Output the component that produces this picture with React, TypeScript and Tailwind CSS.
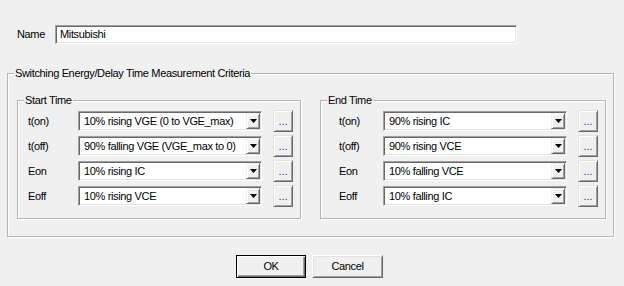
import React from "react";

const font = "font-['Liberation_Sans',Arial,sans-serif] tracking-[-0.35px]";

function DropArrow() {
  return (
    <svg width="7" height="4" viewBox="0 0 7 4">
      <polygon points="0,0 7,0 3.5,4" fill="#000" />
    </svg>
  );
}

function Combo({ value }: { value: string }) {
  return (
    <div className="flex h-[20px] w-[184px] items-stretch border border-t-[#a0a0a0] border-l-[#a0a0a0] border-r-white border-b-white bg-white p-[1px] shadow-[inset_1px_1px_0_#696969,inset_-1px_-1px_0_#e3e3e3]">
      <div className="flex flex-1 items-center pl-[4px] text-[11px] leading-none text-black">{value}</div>
      <div className="flex w-[14px] items-center justify-center border border-t-[#f0f0f0] border-l-[#f0f0f0] border-r-[#696969] border-b-[#696969] bg-[#f0f0f0] shadow-[inset_1px_1px_0_#fff,inset_-1px_-1px_0_#a0a0a0]">
        <DropArrow />
      </div>
    </div>
  );
}

function DotsButton() {
  return (
    <div className="flex h-[22px] w-[20px] items-end justify-center border border-t-[#e3e3e3] border-l-[#e3e3e3] border-r-[#696969] border-b-[#696969] bg-[#f0f0f0] pb-[4px] text-[11px] leading-none tracking-[0px] text-[#2a3a7a] shadow-[inset_1px_1px_0_#fff,inset_-1px_-1px_0_#a0a0a0]">
      ...
    </div>
  );
}

function Row({ label, value, labelW }: { label: string; value: string; labelW: string }) {
  return (
    <div className="flex h-[22px] items-center">
      <div className={`${labelW} text-[11px] leading-none text-black`}>{label}</div>
      <Combo value={value} />
      <div className="ml-[11px]">
        <DotsButton />
      </div>
    </div>
  );
}

function Group({
  title,
  rows,
  width,
  pl,
  labelW,
}: {
  title: string;
  rows: [string, string][];
  width: string;
  pl: string;
  labelW: string;
}) {
  return (
    <fieldset
      className={`${width} border border-[#b4b4b4] shadow-[inset_1px_1px_0_#fff,1px_1px_0_#fff]`}
    >
      <legend className="ml-[6px] bg-[#f0f0f0] px-[1px] text-[11px] leading-[14px] text-black">{title}</legend>
      <div className={`flex flex-col gap-[3px] ${pl} pt-[3px] pb-[11px]`}>
        {rows.map(([l, v]) => (
          <Row key={l} label={l} value={v} labelW={labelW} />
        ))}
      </div>
    </fieldset>
  );
}

export default function App() {
  const start: [string, string][] = [
    ["t(on)", "10% rising VGE (0 to VGE_max)"],
    ["t(off)", "90% falling VGE (VGE_max to 0)"],
    ["Eon", "10% rising IC"],
    ["Eoff", "10% rising VCE"],
  ];
  const end: [string, string][] = [
    ["t(on)", "90% rising IC"],
    ["t(off)", "90% rising VCE"],
    ["Eon", "10% falling VCE"],
    ["Eoff", "10% falling IC"],
  ];
  return (
    <div className={`${font} flex h-[286px] w-[624px] flex-col bg-[#f0f0f0] text-black`}>
      <div className="mt-[25px] flex items-center pl-[17px]">
        <div className="w-[38px] text-[11px] leading-none">Name</div>
        <div className="flex h-[19px] w-[462px] items-center border border-t-[#a0a0a0] border-l-[#a0a0a0] border-r-white border-b-white bg-white pl-[4px] text-[11px] leading-none shadow-[inset_1px_1px_0_#696969,inset_-1px_-1px_0_#e3e3e3]">
          Mitsubishi
        </div>
      </div>

      <fieldset className="ml-[7px] mt-[22px] w-[607px] border border-[#b4b4b4] shadow-[inset_1px_1px_0_#fff,1px_1px_0_#fff]">
        <legend className="ml-[6px] bg-[#f0f0f0] px-[1px] text-[11px] leading-[14px]">
          Switching Energy/Delay Time Measurement Criteria
        </legend>
        <div className="flex gap-[19px] pl-[9px] pt-[13px] pb-[17px]">
          <Group title="Start Time" rows={start} width="w-[284px]" pl="pl-[10px]" labelW="w-[50px]" />
          <Group title="End Time" rows={end} width="w-[286px]" pl="pl-[18px]" labelW="w-[44px]" />
        </div>
      </fieldset>

      <div className="mt-[18px] flex gap-[6px] pl-[236px]">
        <div className="flex h-[23px] w-[70px] items-center justify-center border border-black bg-[#f0f0f0] text-[11px] leading-none shadow-[inset_1px_1px_0_#fff,inset_-1px_-1px_0_#696969,inset_-2px_-2px_0_#a0a0a0]">
          OK
        </div>
        <div className="flex h-[23px] w-[71px] items-center justify-center border border-t-[#fff] border-l-[#fff] border-r-[#696969] border-b-[#696969] bg-[#f0f0f0] text-[11px] leading-none shadow-[inset_1px_1px_0_#e3e3e3,inset_-1px_-1px_0_#a0a0a0]">
          Cancel
        </div>
      </div>
    </div>
  );
}
